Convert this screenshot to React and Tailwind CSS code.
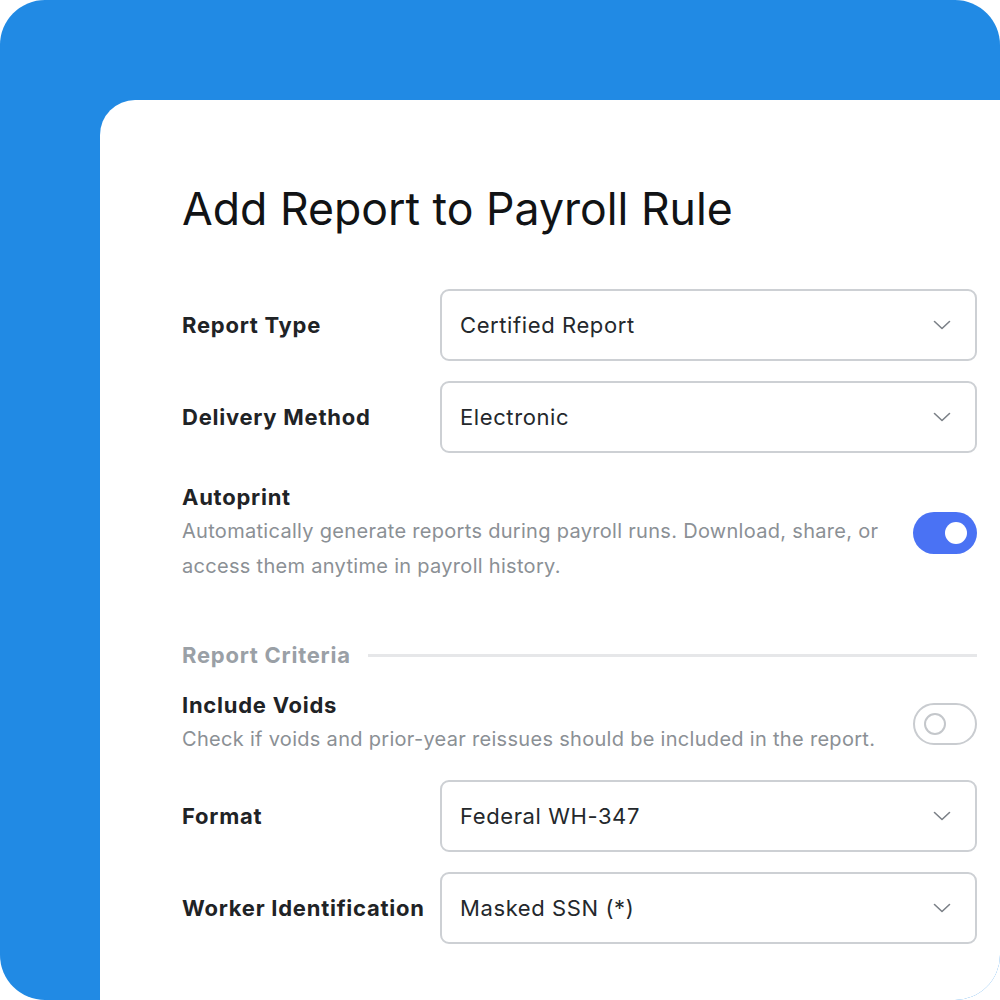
import React from "react";

const bodyFont = { fontFamily: "Inter, 'Open Sans', sans-serif" };

const Chevron = () => (
  <svg width="18" height="10" viewBox="0 0 18 10" fill="none" className="shrink-0">
    <path d="M1.5 1.5 L9 8.5 L16.5 1.5" stroke="#7b8087" strokeWidth="1.6" strokeLinecap="round" strokeLinejoin="round" />
  </svg>
);

const SelectRow = ({ label, value, className = "" }) => (
  <div className={`flex items-center ${className}`}>
    <div className="w-[258px] shrink-0 text-[22px] font-bold tracking-[0.75px] text-[#1f2326]">{label}</div>
    <div className="flex-1 h-[72px] flex items-center justify-between border-2 border-[#cdd0d4] rounded-[9px] pl-[18px] pr-[24px]">
      <span className="text-[22px] tracking-[0.6px] text-[#24282c]">{value}</span>
      <Chevron />
    </div>
  </div>
);

const Toggle = ({ on }) =>
  on ? (
    <div className="w-[64px] h-[42px] rounded-full bg-[#4a72f4] flex items-center justify-end pr-[10px] shrink-0">
      <div className="w-[22px] h-[22px] rounded-full bg-white" />
    </div>
  ) : (
    <div className="w-[64px] h-[42px] rounded-full border-2 border-[#c9ccd0] bg-white flex items-center pl-[9px] shrink-0">
      <div className="w-[22px] h-[22px] rounded-full border-2 border-[#c4c7cb]" />
    </div>
  );

const ToggleRow = ({ label, desc, on, className = "" }) => (
  <div className={`flex items-center justify-between ${className}`}>
    <div className="w-[720px]">
      <div className="text-[22px] leading-[30px] font-bold tracking-[0.75px] text-[#1f2326]">{label}</div>
      <div className="mt-[2px] text-[20px] leading-[35px] tracking-[0.3px] text-[#8b9095]">{desc}</div>
    </div>
    <Toggle on={on} />
  </div>
);

export default function App() {
  return (
    <div className="w-[1000px] h-[1000px] bg-white">
      <div className="w-full h-full bg-[#218ae4] rounded-[45px] overflow-hidden pl-[100px] pt-[100px]">
        <div className="w-full h-full bg-white rounded-tl-[35px] pl-[82px] pr-[23px] pt-[82px]" style={bodyFont}>
          <h1 className="text-[44.6px] leading-[54px] text-[#111315]" style={{ fontFamily: "Inter, sans-serif" }}>
            Add Report to Payroll Rule
          </h1>

          <SelectRow label="Report Type" value="Certified Report" className="mt-[53px]" />
          <SelectRow label="Delivery Method" value="Electronic" className="mt-[20px]" />

          <ToggleRow
            className="mt-[29px]"
            label="Autoprint"
            desc="Automatically generate reports during payroll runs. Download, share, or access them anytime in payroll history."
            on
          />

          <div className="mt-[56px] flex items-center gap-[17px]">
            <span className="text-[22px] leading-[30px] font-bold tracking-[0.75px] text-[#9aa0a6]">Report Criteria</span>
            <div className="flex-1 h-[3px] bg-[#e6e7e9]" />
          </div>

          <ToggleRow
            className="mt-[20px]"
            label="Include Voids"
            desc="Check if voids and prior-year reissues should be included in the report."
            on={false}
          />

          <SelectRow label="Format" value="Federal WH-347" className="mt-[23px]" />
          <SelectRow label="Worker Identification" value="Masked SSN (*)" className="mt-[20px]" />
        </div>
      </div>
    </div>
  );
}
